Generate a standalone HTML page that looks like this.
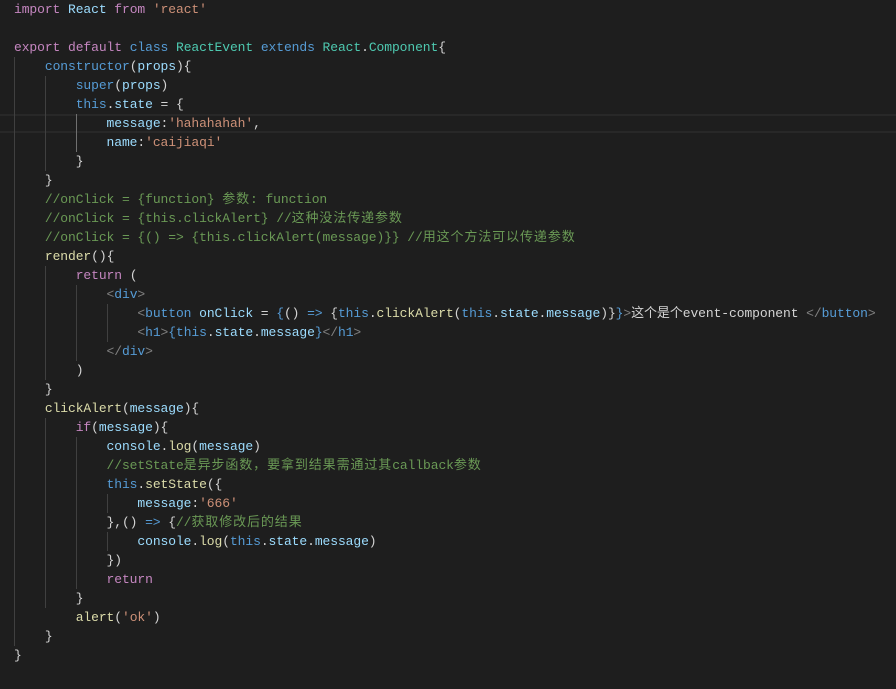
<!DOCTYPE html><html><head><meta charset="utf-8"><style>
body{margin:0;background:#1e1e1e;width:896px;height:689px;overflow:hidden;position:relative}
pre{margin:0;position:absolute;left:14px;top:0;font-family:"Liberation Mono","Noto Sans CJK SC",monospace;font-size:13px;letter-spacing:-0.09px;line-height:19px;color:#d4d4d4}
.g{position:absolute;width:1px;background:#404040}
.hl{position:absolute;left:0;right:0;top:114px;height:15px;border-top:2px solid #282828;border-bottom:2px solid #282828}
.p{color:#c586c0}.k{color:#569cd6}.v{color:#9cdcfe}.t{color:#4ec9b0}.s{color:#ce9178}.c{color:#6a9955}.f{color:#dcdcaa}.a{color:#808080}
i{font-style:normal;letter-spacing:0.9px}
</style></head><body>
<div class="hl"></div>
<div class="g" style="left:14px;top:57px;height:589px"></div>
<div class="g" style="left:45px;top:76px;height:95px"></div>
<div class="g" style="left:45px;top:266px;height:114px"></div>
<div class="g" style="left:45px;top:418px;height:190px"></div>
<div class="g" style="left:76px;top:114px;height:38px;background:#707070"></div>
<div class="g" style="left:76px;top:285px;height:76px"></div>
<div class="g" style="left:107px;top:304px;height:38px"></div>
<div class="g" style="left:76px;top:437px;height:152px"></div>
<div class="g" style="left:107px;top:494px;height:19px"></div>
<div class="g" style="left:107px;top:532px;height:19px"></div>
<pre><span class="p">import</span> <span class="v">React</span> <span class="p">from</span> <span class="s">'react'</span>

<span class="p">export</span> <span class="p">default</span> <span class="k">class</span> <span class="t">ReactEvent</span> <span class="k">extends</span> <span class="t">React</span>.<span class="t">Component</span>{
    <span class="k">constructor</span>(<span class="v">props</span>){
        <span class="k">super</span>(<span class="v">props</span>)
        <span class="k">this</span>.<span class="v">state</span> = {
            <span class="v">message</span>:<span class="s">'hahahahah'</span>,
            <span class="v">name</span>:<span class="s">'caijiaqi'</span>
        }
    }
    <span class="c">//onClick = {function} <i>参数</i>: function</span>
    <span class="c">//onClick = {this.clickAlert} //<i>这种没法传递参数</i></span>
    <span class="c">//onClick = {() =&gt; {this.clickAlert(message)}} //<i>用这个方法可以传递参数</i></span>
    <span class="f">render</span>(){
        <span class="p">return</span> (
            <span class="a">&lt;</span><span class="k">div</span><span class="a">&gt;</span>
                <span class="a">&lt;</span><span class="k">button</span> <span class="v">onClick</span> = <span class="k">{</span>() <span class="k">=&gt;</span> {<span class="k">this</span>.<span class="f">clickAlert</span>(<span class="k">this</span>.<span class="v">state</span>.<span class="v">message</span>)}<span class="k">}</span><span class="a">&gt;</span>这个是个event-component <span class="a">&lt;/</span><span class="k">button</span><span class="a">&gt;</span>
                <span class="a">&lt;</span><span class="k">h1</span><span class="a">&gt;</span><span class="k">{</span><span class="k">this</span>.<span class="v">state</span>.<span class="v">message</span><span class="k">}</span><span class="a">&lt;/</span><span class="k">h1</span><span class="a">&gt;</span>
            <span class="a">&lt;/</span><span class="k">div</span><span class="a">&gt;</span>
        )
    }
    <span class="f">clickAlert</span>(<span class="v">message</span>){
        <span class="p">if</span>(<span class="v">message</span>){
            <span class="v">console</span>.<span class="f">log</span>(<span class="v">message</span>)
            <span class="c">//setState<i>是异步函数，要拿到结果需通过其</i>callback<i>参数</i></span>
            <span class="k">this</span>.<span class="f">setState</span>({
                <span class="v">message</span>:<span class="s">'666'</span>
            },() <span class="k">=&gt;</span> {<span class="c">//<i>获取修改后的结果</i></span>
                <span class="v">console</span>.<span class="f">log</span>(<span class="k">this</span>.<span class="v">state</span>.<span class="v">message</span>)
            })
            <span class="p">return</span>
        }
        <span class="f">alert</span>(<span class="s">'ok'</span>)
    }
}</pre>
</body></html>
